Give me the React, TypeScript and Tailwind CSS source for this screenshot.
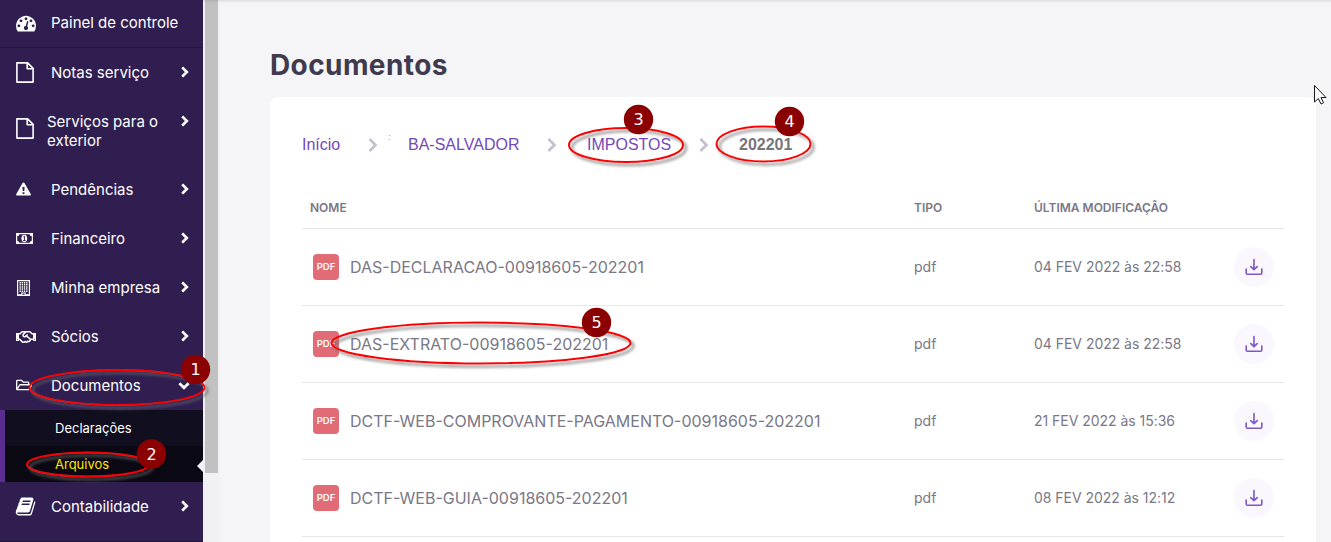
import type { ReactNode } from 'react';
import { FaRegFolderOpen, FaRegHandshake } from 'react-icons/fa';

const DASH = 'M384 1152q0-53-37.5-90.5t-90.5-37.5-90.5 37.5-37.5 90.5 37.5 90.5 90.5 37.5 90.5-37.5 37.5-90.5zm192-448q0-53-37.5-90.5t-90.5-37.5-90.5 37.5-37.5 90.5 37.5 90.5 90.5 37.5 90.5-37.5 37.5-90.5zm428 481l101-382q6-26-7.5-48.5t-38.5-29.5-48 6.5-30 39.5l-101 382q-60 5-107 43.5t-63 98.5q-20 77 20 146t117 89 146-20 89-117q16-60-6-117t-72-91zm660-33q0-53-37.5-90.5t-90.5-37.5-90.5 37.5-37.5 90.5 37.5 90.5 90.5 37.5 90.5-37.5 37.5-90.5zm-640-640q0-53-37.5-90.5t-90.5-37.5-90.5 37.5-37.5 90.5 37.5 90.5 90.5 37.5 90.5-37.5 37.5-90.5zm448 192q0-53-37.5-90.5t-90.5-37.5-90.5 37.5-37.5 90.5 37.5 90.5 90.5 37.5 90.5-37.5 37.5-90.5zm320 448q0 261-141 483-19 29-54 29h-1402q-35 0-54-29-141-221-141-483 0-182 71-348t191-286 286-191 348-71 348 71 286 191 191 286 71 348z';
const BOOK = 'M1703 478q40 57 18 129l-275 906q-19 64-76.5 107.5t-122.5 43.5h-923q-77 0-148.5-53.5t-99.5-131.5q-24-67-2-127 0-4 3-27t4-37q1-8-3-21.5t-3-19.5q2-11 8-21t16.5-23.5 16.5-23.5q23-38 45-91.5t30-91.5q3-10 .5-30t-.5-28q3-11 17-28t17-23q21-36 42-92t25-90q1-9-2.5-32t.5-28q4-13 22-30.5t22-22.5q19-26 42.5-84.5t27.5-96.5q1-8-3-25.5t-2-26.5q2-8 9-18t18-23 17-21q8-12 16.5-30.5t15-35 16-36 19.5-32 26.5-23.5 36-11.5 47.5 5.5l-1 3q38-9 51-9h761q74 0 114 56t18 130l-274 906q-36 119-71.5 153.5t-128.5 34.5h-869q-27 0-38 15-11 16-1 43 24 70 144 70h923q29 0 56-15.5t35-41.5l300-987q7-22 5-57 38 15 59 43zm-1064 2q-4 13 2 22.5t20 9.5h608q13 0 25.5-9.5t16.5-22.5l21-64q4-13-2-22.5t-20-9.5h-608q-13 0-25.5 9.5t-16.5 22.5zm-83 256q-4 13 2 22.5t20 9.5h608q13 0 25.5-9.5t16.5-22.5l21-64q4-13-2-22.5t-20-9.5h-608q-13 0-25.5 9.5t-16.5 22.5z';

const Glyph = ({ d, className }: { d: string; className: string }) => (
  <svg viewBox="0 0 1792 1792" fill="currentColor" className={className}><path d={d} /></svg>
);
const FileIcon = () => (
  <svg viewBox="0 0 18 21" className="h-[21px] w-[18px]" fill="none" stroke="currentColor" strokeWidth="1.6" strokeLinejoin="round">
    <path d="M.9.9H11.6L17.1 6.4V20.1H.9ZM11.2 1V6.8H17" />
  </svg>
);
const WarnIcon = () => (
  <svg viewBox="0 0 16 14" className="mb-px h-[14px] w-[15px]">
    <path fill="currentColor" fillRule="evenodd" d="M8 0Q8.6 0 9 .7L15.8 12.5Q16.2 14 15 14H1Q-.2 14 .2 12.5L7 .7Q7.4 0 8 0ZM6.8 4.8 7.1 9.2H8.9L9.2 4.8ZM7 10.4V12.2H9V10.4Z" />
  </svg>
);
const MoneyIcon = () => (
  <svg viewBox="0 0 17 11" className="h-[11px] w-[17px]">
    <path fill="currentColor" fillRule="evenodd" d="M0 0H17V11H0ZM3.4 1.2Q3.2 3 1.2 3.3V7.7Q3.2 8 3.4 9.8H13.6Q13.8 8 15.8 7.7V3.3Q13.8 3 13.6 1.2Z" />
    <ellipse cx="8.3" cy="5.5" rx="2.9" ry="3.8" fill="currentColor" />
    <path d="M7.3 4 8.5 3.2V7.3M7 7.5H9.8" fill="none" stroke="#2f1e4f" strokeWidth="0.9" />
  </svg>
);
const BuildingIcon = () => (
  <svg viewBox="0 0 13 16" className="ml-px h-4 w-[13px]">
    <path d="M.6.6H12.4V15.4H.6Z" fill="none" stroke="currentColor" strokeWidth="1.2" />
    <path d="M3.2 2V12.5M5.4 2V12.5M7.6 2V12.5M9.8 2V12.5" stroke="currentColor" strokeWidth="1.4" strokeDasharray="1.5 .6" />
    <path d="M4.8 15.4V13H8.2V15.4" fill="none" stroke="currentColor" strokeWidth="1.1" />
    <path d="M1 15H4.8M8.2 15H12" stroke="currentColor" strokeWidth="1.6" />
  </svg>
);
const Chevron = ({ down }: { down?: boolean }) => (
  <svg viewBox="0 0 10 12" className={down ? 'mr-px h-3 w-[10px] rotate-90' : 'h-3 w-[10px]'}>
    <path d="M2.2 1.4 6.8 6 2.2 10.6" fill="none" stroke="currentColor" strokeWidth="2.7" />
  </svg>
);

function Item({ icon, label, open }: { icon: ReactNode; label: string; open?: boolean }) {
  return (
    <div className="flex h-[49px] shrink-0 items-center pl-4 pr-[13px]">
      <span className="flex w-[35px] shrink-0 items-center">{icon}</span>
      <span className="flex-1 whitespace-nowrap text-[15px] leading-5">{label}</span>
      <span className={open ? 'mt-px' : 'mb-px'}><Chevron down={open} /></span>
    </div>
  );
}

function Sidebar() {
  return (
    <nav className="flex w-[203px] shrink-0 flex-col bg-[#2f1e4f] text-white">
      <div className="flex h-12 shrink-0 items-center border-b border-[#21173b] pb-[2px] pl-4">
        <span className="w-[35px]"><Glyph d={DASH} className="mt-px size-5" /></span>
        <span className="whitespace-nowrap text-[15px] leading-5">Painel de controle</span>
      </div>
      <Item icon={<FileIcon />} label="Notas serviço" />
      <div className="flex h-[68px] shrink-0 pl-4 pr-[13px]">
        <span className="w-[31px] shrink-0 pt-[21px]"><FileIcon /></span>
        <span className="flex-1 whitespace-nowrap pt-[15px] text-[15px] leading-[19px]">Serviços para o<br />exterior</span>
        <span className="pt-[18px]"><Chevron /></span>
      </div>
      <Item icon={<WarnIcon />} label="Pendências" />
      <Item icon={<MoneyIcon />} label="Financeiro" />
      <Item icon={<BuildingIcon />} label="Minha empresa" />
      <Item icon={<FaRegHandshake className="size-5" />} label="Sócios" />
      <Item icon={<FaRegFolderOpen className="mb-px size-4" />} label="Documentos" open />
      <div className="h-[72px] shrink-0 border-l-[5px] border-[#5c2d91] text-[13px]">
        <div className="flex h-9 items-center bg-[#110e20] pl-[50px] pt-[2px]">Declarações</div>
        <div className="flex h-9 items-center justify-between bg-[#0a0812] pl-[50px] pt-[2px] text-[#ffe600]">
          Arquivos
          <svg viewBox="0 0 6 12" className="mt-[2px] h-3 w-[6px]"><path d="M6 0V12L0 6Z" fill="#f0f0fa" /></svg>
        </div>
      </div>
      <Item icon={<Glyph d={BOOK} className="-ml-px size-[21px]" />} label="Contabilidade" />
      <div className="mt-[10px] h-px shrink-0 bg-[#21173b]" />
    </nav>
  );
}

const Sep = ({ className }: { className: string }) => (
  <svg viewBox="0 0 10 14" className={`h-[14px] w-[10px] ${className}`}>
    <path d="M1.5 1 7.5 7 1.5 13" fill="none" stroke="#c5bfd0" strokeWidth="2.7" />
  </svg>
);

const rows = [
  ['DAS-DECLARACAO-00918605-202201', '04 FEV 2022 às 22:58'],
  ['DAS-EXTRATO-00918605-202201', '04 FEV 2022 às 22:58'],
  ['DCTF-WEB-COMPROVANTE-PAGAMENTO-00918605-202201', '21 FEV 2022 às 15:36'],
  ['DCTF-WEB-GUIA-00918605-202201', '08 FEV 2022 às 12:12'],
];

function FileRow({ name, date }: { name: string; date: string }) {
  return (
    <div className="grid h-[77px] shrink-0 grid-cols-[604px_120px_199px_1fr] items-center border-b border-[#e6e5ec] pl-2 text-[#7a7786]">
      <div className="flex items-center gap-[11px] pl-[3px]">
        <span className="flex size-[26px] items-center justify-center rounded-[4px] bg-[#e16c75] text-[9.5px] font-semibold text-white">PDF</span>
        <span className="whitespace-nowrap text-[16px]">{name}</span>
      </div>
      <span className="pb-[2px] text-[14px]">pdf</span>
      <span className="whitespace-nowrap pb-[2px] text-[14px] tracking-[-0.03px]">{date}</span>
      <span className="ml-px flex size-10 items-center justify-center rounded-full bg-[#faf8fe]">
        <svg viewBox="0 0 18 18" className="size-[18px]" fill="none" stroke="#7e57c2" strokeWidth="1.6" strokeLinecap="round" strokeLinejoin="round">
          <path d="M9 1.5V11M5.8 8.6 9 11.6 12.2 8.6M1.2 11V15Q1.2 16.3 2.5 16.3H15.5Q16.8 16.3 16.8 15V11" />
        </svg>
      </span>
    </div>
  );
}

const marks = [
  { n: 1, cx: 117, cy: 387.5, rx: 87.5, ry: 17.5, bx: 195.5, by: 369.5 },
  { n: 2, cx: 88, cy: 464.5, rx: 61, ry: 12, bx: 151.5, by: 454 },
  { n: 3, cx: 626, cy: 145, rx: 57, ry: 17, bx: 638.5, by: 119.5 },
  { n: 4, cx: 763.5, cy: 144, rx: 47, ry: 17.5, bx: 789.5, by: 121.5 },
  { n: 5, cx: 481, cy: 343, rx: 149.5, ry: 20.5, bx: 596.5, by: 322.5 },
];

function Annotations() {
  return (
    <svg className="pointer-events-none absolute inset-0" width="1331" height="542" viewBox="0 0 1331 542">
      <defs>
        <filter id="shade" x="-20%" y="-50%" width="140%" height="220%">
          <feDropShadow dx="3" dy="3" stdDeviation="1.5" floodColor="#6c6c6c" floodOpacity="0.85" />
        </filter>
      </defs>
      {marks.map((m) => (
        <g key={m.n}>
          <ellipse cx={m.cx} cy={m.cy} rx={m.rx} ry={m.ry} fill="none" stroke="#fb0606" strokeWidth="2" filter="url(#shade)" />
          <circle cx={m.bx} cy={m.by} r="14.7" fill="#8b0000" />
          <text x={m.bx} y={m.by + 5.5} textAnchor="middle" fill="#fff" fontSize="16" className="font-['DejaVu_Sans',sans-serif]">{m.n}</text>
        </g>
      ))}
      <path d="M1314.5 85.5V102L1318.3 98.5 1321 104 1323.5 102.8 1321 97.5H1326Z" fill="#fff" stroke="#161626" strokeWidth="1" />
    </svg>
  );
}

export default function App() {
  return (
    <div className="relative flex h-[542px] w-[1331px] overflow-hidden bg-[#f5f5f8] font-['Inter',sans-serif]">
      <Sidebar />
      <div className="flex w-[17px] shrink-0 bg-[#f1f1f3] pl-[2px]"><div className="h-[473px] w-[13px] bg-[#c1c1c1]" /></div>
      <main className="flex flex-1 flex-col pl-[50px] pr-[15px]">
        <h1 className="h-[97px] shrink-0 pt-[48px] text-[28px] font-bold leading-[34px] tracking-[0.4px] text-[#403a4e]">Documentos</h1>
        <section className="flex flex-1 flex-col rounded-t-lg bg-white px-8">
          <div className="flex h-[91px] shrink-0 items-center pt-[4px] font-['Liberation_Sans',sans-serif] text-[16px] text-[#7547bb]">
            <span className="w-[66px]">Início</span><Sep className="mt-px" />
            <span className="ml-[10px] w-[20px] pb-[14px] text-[9px] text-[#7d9eb8]">:</span>
            <span className="w-[139px]">BA-SALVADOR</span><Sep className="mt-px" />
            <span className="ml-[30px] w-[112px]">IMPOSTOS</span><Sep className="mt-px" />
            <span className="ml-[30px] font-bold text-[#77757b]">202201</span>
          </div>
          <div className="grid h-[41px] shrink-0 grid-cols-[604px_120px_1fr] items-center border-b border-[#e6e5ec] pl-2 text-[12px] font-semibold text-[#7a7786]">
            <span>NOME</span><span>TIPO</span><span>ÚLTIMA MODIFICAÇÃO</span>
          </div>
          {rows.map(([name, date]) => <FileRow key={name} name={name} date={date} />)}
        </section>
      </main>
      <div className="absolute left-[203px] right-0 top-0 h-[3px] bg-gradient-to-b from-black/10 to-transparent" />
      <Annotations />
    </div>
  );
}
